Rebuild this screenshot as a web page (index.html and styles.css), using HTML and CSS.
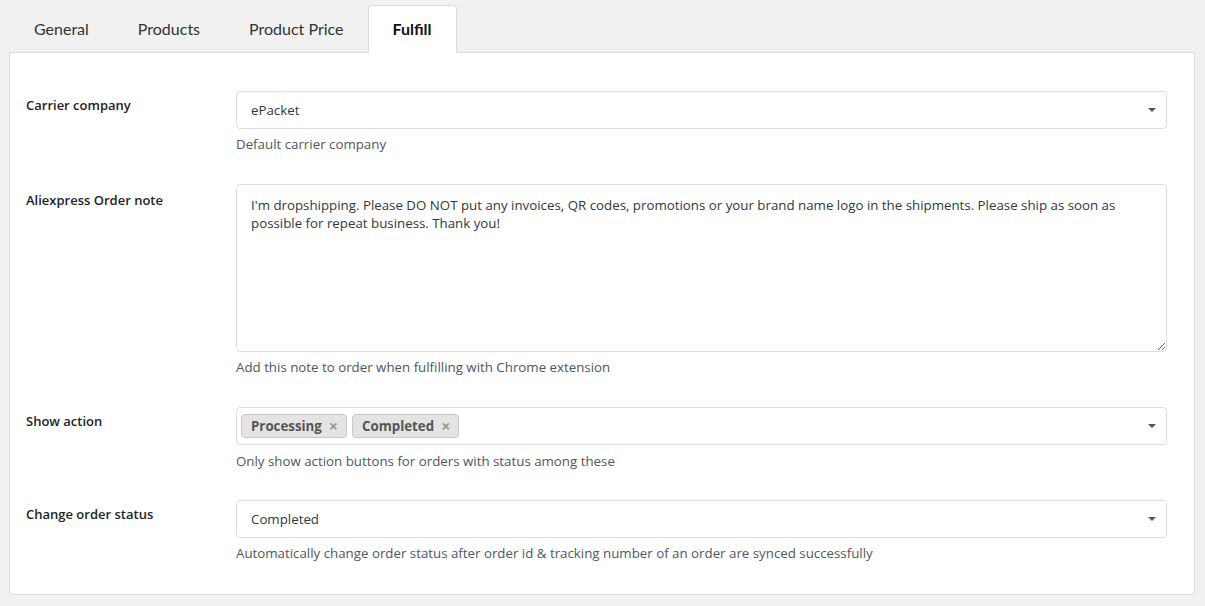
FILE: index.html
```html
<!DOCTYPE html>
<html>
<head>
<meta charset="utf-8">
<link rel="stylesheet" href="styles.css">
</head>
<body>
<div class="page">
  <nav class="tabs">
    <a class="tab">General</a>
    <a class="tab">Products</a>
    <a class="tab">Product Price</a>
    <a class="tab active">Fulfill</a>
  </nav>
  <div class="panel">
    <div class="row">
      <div class="label">Carrier company</div>
      <div class="field">
        <div class="select"><span class="value">ePacket</span><span class="arrow"></span></div>
        <div class="desc">Default carrier company</div>
      </div>
    </div>
    <div class="row">
      <div class="label label-ta">Aliexpress Order note</div>
      <div class="field">
        <textarea class="textarea">I'm dropshipping. Please DO NOT put any invoices, QR codes, promotions or your brand name logo in the shipments. Please ship as soon as possible for repeat business. Thank you!</textarea>
        <div class="desc desc-ta">Add this note to order when fulfilling with Chrome extension</div>
      </div>
    </div>
    <div class="row">
      <div class="label">Show action</div>
      <div class="field">
        <div class="select multi">
          <span class="chip">Processing<span class="x">×</span></span>
          <span class="chip">Completed<span class="x">×</span></span>
          <span class="arrow"></span>
        </div>
        <div class="desc desc-multi">Only show action buttons for orders with status among these</div>
      </div>
    </div>
    <div class="row">
      <div class="label">Change order status</div>
      <div class="field">
        <div class="select"><span class="value">Completed</span><span class="arrow"></span></div>
        <div class="desc">Automatically change order status after order id &amp; tracking number of an order are synced successfully</div>
      </div>
    </div>
  </div>
</div>
</body>
</html>
```
FILE: styles.css
```css
* { box-sizing: border-box; }
html, body { margin: 0; padding: 0; background: #f1f1f1; }
body {
  font-family: "Open Sans", "Noto Sans", sans-serif;
  font-size: 13.3px;
  color: #3c434a;
}
.page { padding: 5px 10px 0 9px; }
.tabs { display: flex; height: 47px; }
.tab {
  font-family: Lato, "Open Sans", sans-serif;
  font-size: 16px;
  color: #333;
  padding: 0 23px 1px 24px;
  border: 1px solid transparent;
  border-bottom: none;
  display: flex;
  align-items: center;
}
.tab.active {
  background: #fff;
  border-color: #dcdcde;
  border-radius: 4px 4px 0 0;
  font-weight: 700;
  color: #111;
  position: relative;
  margin-bottom: -1px;
  height: 48px;
  z-index: 1;
  padding: 0 24px 3px 24px;
}
.panel {
  background: #fff;
  border: 1px solid #dcdcde;
  border-radius: 0 0 3px 3px;
  padding: 23px 27px 16px 16px;
}
.row { display: flex; padding: 15px 0 16px; }
.label {
  width: 210px;
  flex: none;
  font-size: 13px;
  font-weight: 600;
  color: #1d2327;
  line-height: 18px;
  padding-top: 5px;
}
.label-ta { padding-top: 7px; }
.field { flex: 1; min-width: 0; }
.select {
  height: 38px;
  border: 1px solid #dddddd;
  border-radius: 4px;
  display: flex;
  align-items: center;
  padding: 0 14px;
  position: relative;
  color: #32373c;
}
.select .value { flex: 1; }
.arrow {
  position: absolute;
  right: 10px;
  top: 16px;
  width: 0; height: 0;
  border-left: 4px solid transparent;
  border-right: 4px solid transparent;
  border-top: 4px solid #555;
}
.select.multi { padding: 0 4px; gap: 5px; }
.chip {
  display: inline-flex;
  align-items: center;
  height: 24px;
  margin-top: -1px;
  padding: 0 8px 0 9px;
  background: #e4e4e4;
  border: 1px solid #c8c8c8;
  border-radius: 4px;
  font-weight: 700;
  color: #555;
}
.chip .x {
  margin-left: 7px;
  color: #999;
  font-weight: 700;
  font-size: 16px;
  line-height: 1;
}
.textarea {
  display: block;
  width: 100%;
  height: 168px;
  border: 1px solid #dddddd;
  border-radius: 4px;
  padding: 11px 14px;
  font-family: inherit;
  font-size: 13.3px;
  line-height: 18px;
  color: #32373c;
  resize: vertical;
}
.desc {
  margin-top: 6px;
  line-height: 18px;
  color: #50575e;
}
.desc-ta { margin-top: 6px; }
.desc-multi { margin-top: 7px; margin-bottom: -1px; }
```
